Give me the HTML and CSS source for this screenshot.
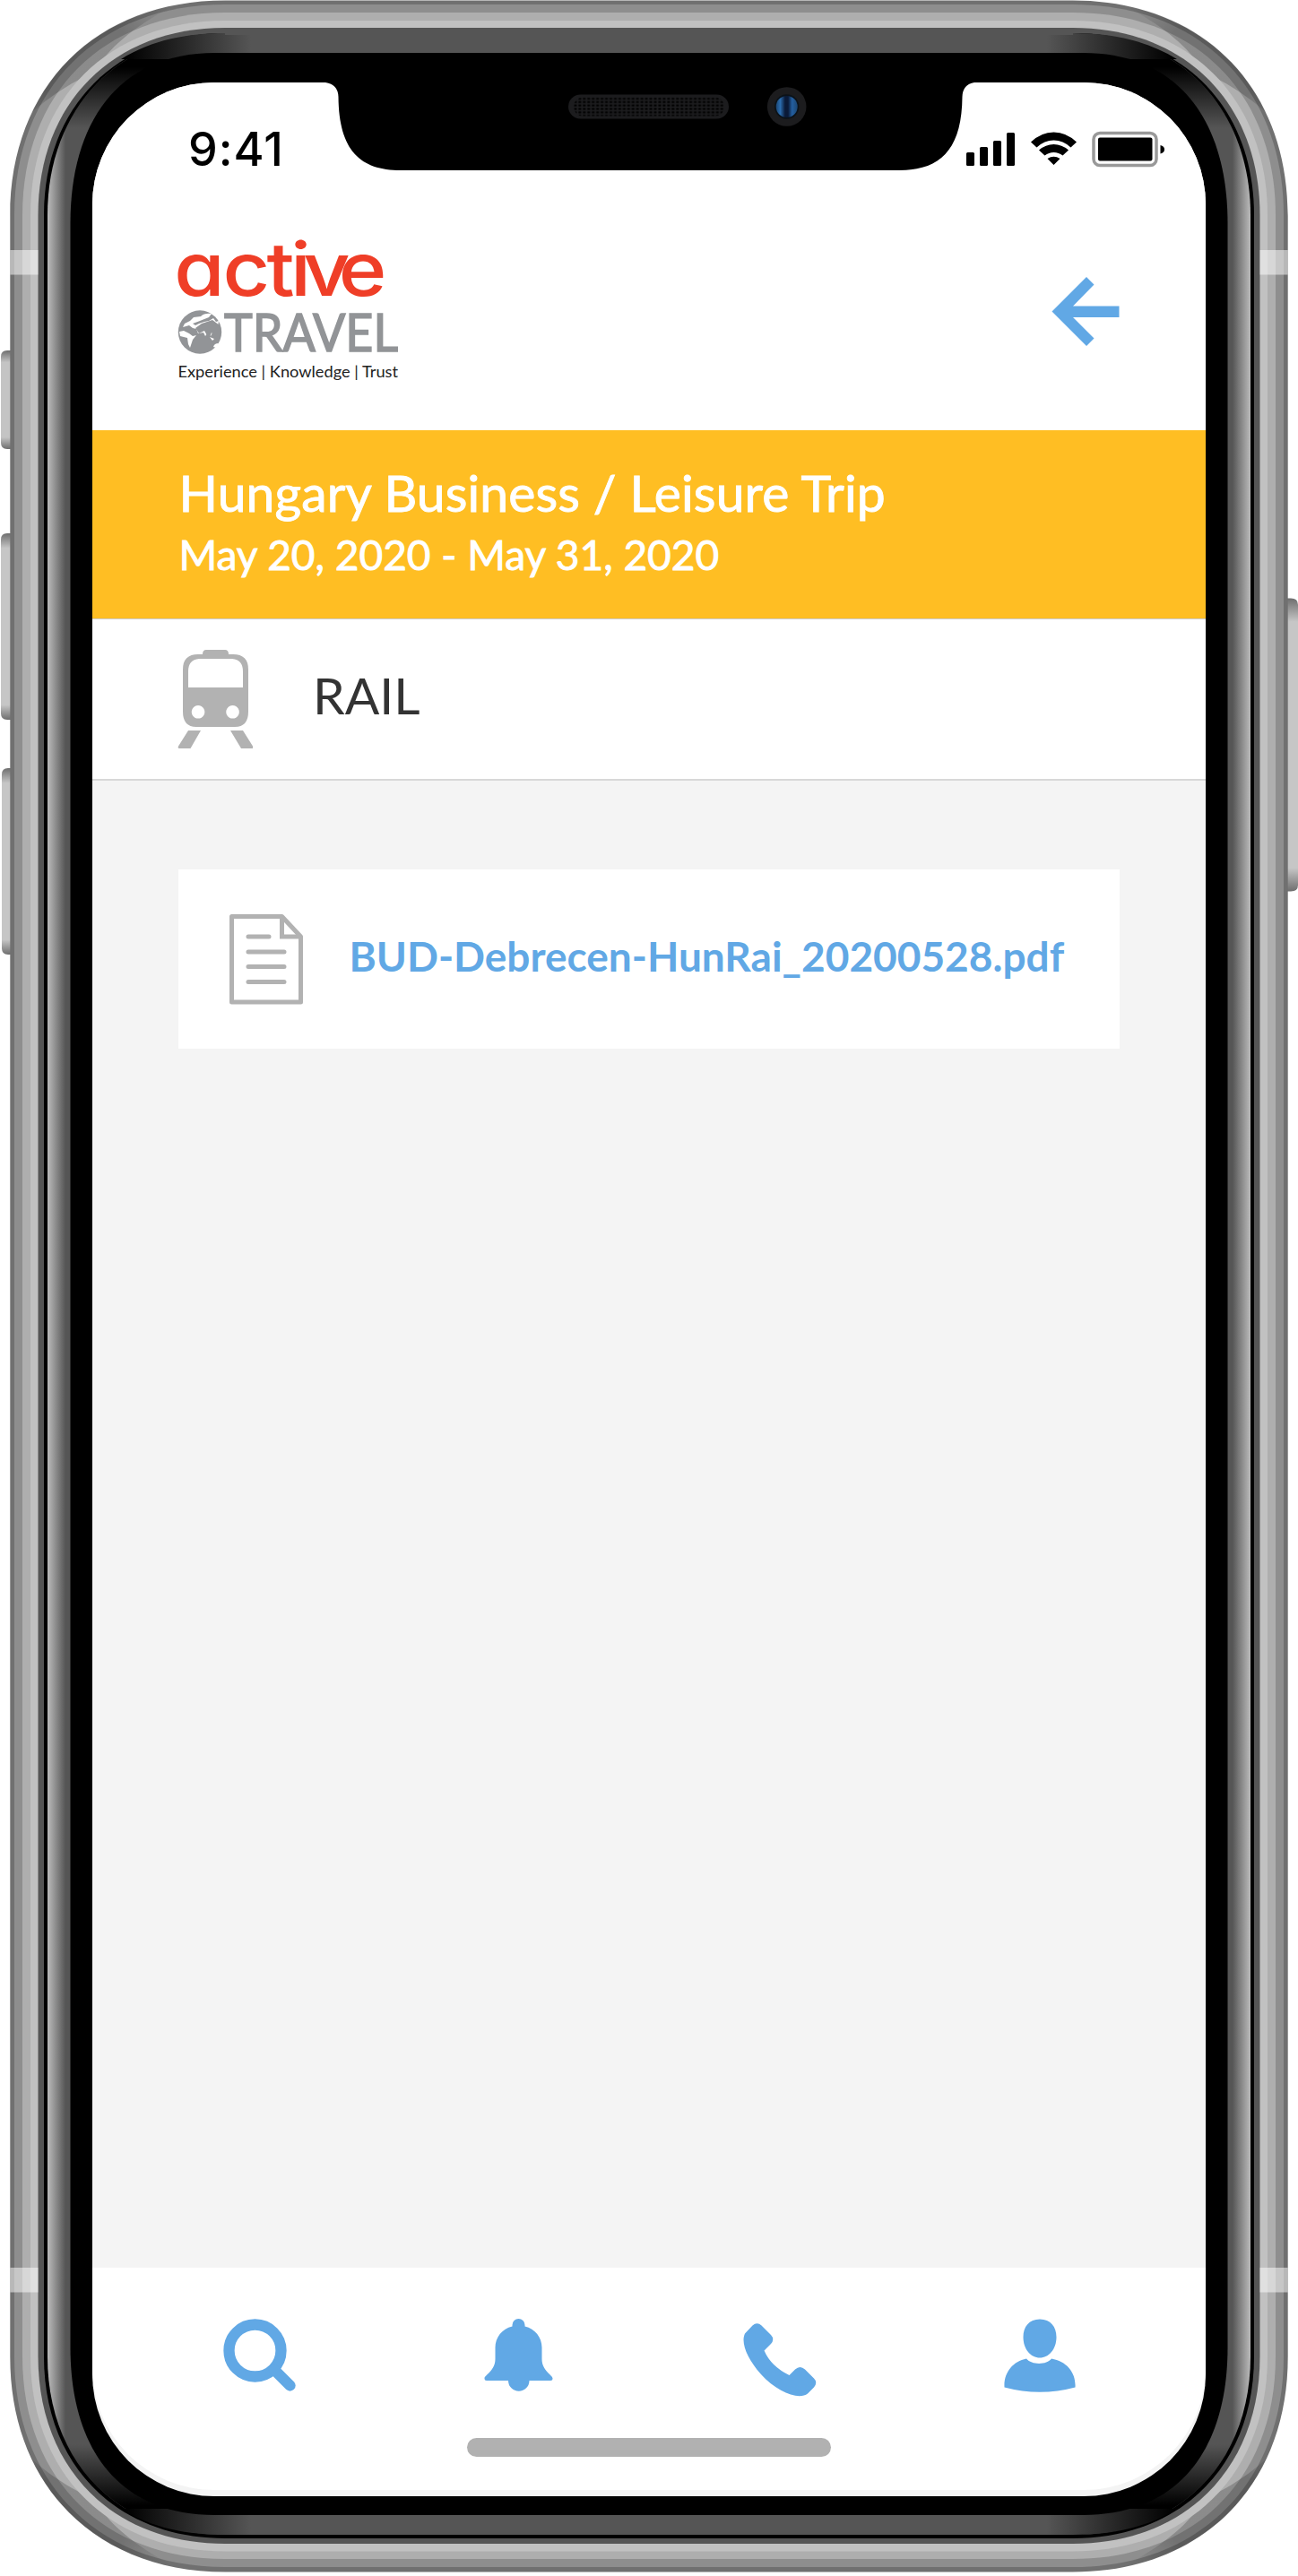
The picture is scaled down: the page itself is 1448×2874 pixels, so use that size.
FILE: index.html
```html
<!DOCTYPE html>
<html lang="en">
<head>
<meta charset="utf-8">
<title>Active Travel - Rail</title>
<link rel="stylesheet" href="styles.css">
</head>
<body>
<main class="phone">
  <svg class="frame" viewBox="0 0 1448 2874" aria-hidden="true">
    <defs>
      <linearGradient id="btn" x1="0" y1="0" x2="0" y2="1"><stop offset="0" stop-color="#6e6e6e"/><stop offset=".12" stop-color="#c4c4c4"/><stop offset=".88" stop-color="#c4c4c4"/><stop offset="1" stop-color="#6e6e6e"/></linearGradient>
      <linearGradient id="btnLong" x1="0" y1="0" x2="0" y2="1"><stop offset="0" stop-color="#6e6e6e"/><stop offset=".08" stop-color="#c6c6c6"/><stop offset=".92" stop-color="#c6c6c6"/><stop offset="1" stop-color="#6e6e6e"/></linearGradient>
      <linearGradient id="side" gradientUnits="userSpaceOnUse" x1="53" y1="0" x2="1395" y2="0"><stop offset="0" stop-color="#bbb"/><stop offset=".015" stop-color="#555"/><stop offset=".985" stop-color="#555"/><stop offset="1" stop-color="#bbb"/></linearGradient>
      <linearGradient id="top" gradientUnits="userSpaceOnUse" x1="140" y1="0" x2="1308" y2="0"><stop offset="0" stop-color="#000"/><stop offset=".12" stop-color="#555"/><stop offset=".88" stop-color="#555"/><stop offset="1" stop-color="#000"/></linearGradient>
      <linearGradient id="vfade" gradientUnits="userSpaceOnUse" x1="0" y1="75" x2="0" y2="2795"><stop offset="0" stop-color="#000"/><stop offset=".025" stop-color="#000" stop-opacity="0"/><stop offset=".975" stop-color="#000" stop-opacity="0"/><stop offset="1" stop-color="#000"/></linearGradient>
      <linearGradient id="facet" gradientUnits="userSpaceOnUse" x1="35" y1="145" x2="180" y2="10"><stop offset="0" stop-opacity="0"/><stop offset=".22" stop-opacity=".2"/><stop offset=".75" stop-opacity=".2"/><stop offset="1" stop-opacity=".03"/></linearGradient>
      <linearGradient id="lens" x1="0" y1="0" x2="1" y2="0"><stop offset="0" stop-color="#1b4673"/><stop offset=".2" stop-color="#2b6cae"/><stop offset=".42" stop-color="#0a1a38"/><stop offset=".56" stop-color="#0a1a38"/><stop offset=".75" stop-color="#245f9f"/><stop offset="1" stop-color="#1b4673"/></linearGradient>
      <pattern id="mesh" width="4.95" height="3.8" patternUnits="userSpaceOnUse" x="640" y="108.6"><rect x=".4" y=".5" width="3" height="2" fill="#000"/></pattern>
      <clipPath id="body"><path d="M251.3 0h945.4c144 0 240 96 240 240v2389c0 144-96 240-240 240h-945.4c-144 0-240-96-240-240V240C11.3 96 107.3 0 251.3 0z"/></clipPath>
      <path id="corner" d="M0 160C45 112 75 94 107 80C118 55 150 30 190 8L0 0z"/>
    </defs>
    <g fill="url(#btn)"><path d="M12 391H8q-7 0-7 7v96q0 7 7 7h4z"/></g>
    <g fill="url(#btnLong)"><path d="M12 595H8q-7 0-7 7v194q0 7 7 7h4z"/><path d="M12 857H9q-7 0-7 7v194q0 7 7 7h3z"/><path d="M1436 667.500h4q8 0 8 7v313q0 7-8 7h-4z"/></g>
    <path fill="#707070" d="M251.3.5h945.4c144 0 240 96 240 240v2389c0 144-96 240-240 240h-945.4c-144 0-240-96-240-240v-2389c0-144 96-240 240-240z"/>
    <path fill="#8e8e8e" d="M251 5h946c141 0 235 94 235 235v2389c0 141-94 235-235 235H251c-141 0-235-94-235-235V240C16 99 110 5 251 5z"/>
    <path fill="#aeaeae" d="M251 14h946c136 0 226 90 226 226v2389c0 136-90 226-226 226H251c-136 0-226-90-226-226V240C25 104 115 14 251 14z"/>
    <g clip-path="url(#body)" fill="url(#facet)"><use href="#corner"/><use href="#corner" transform="matrix(-1 0 0 1 1448 0)"/><use href="#corner" transform="matrix(1 0 0 -1 0 2869)"/><use href="#corner" transform="matrix(-1 0 0 -1 1448 2869)"/></g>
    <path fill="#c1c1c1" d="M251 23h946c130 0 217 87 217 217v2389c0 130-87 217.500-217 217.500H251c-130 0-217-87.500-217-217.500V240C34 110 121 23 251 23z"/>
    <path fill="#555" d="M251 31h946c125 0 208.500 84 208.500 209v2389c0 125-83.500 209-208.500 209H251c-125 0-208.500-84-208.500-209V240C42.500 115 126 31 251 31z"/>
    <path fill="#000" d="M251 37h946c121 0 202 82 202 203v2389c0 121-81 203-202 203H251c-121 0-202-82-202-203V240C49 119 130 37 251 37z"/>
    <path fill="url(#side)" d="M251 37h946c119 0 198 84 198 203v2389c0 119-79 199-198 199H251c-119 0-198-80-198-199V240C53 121 132 37 251 37z"/>
    <path fill="url(#vfade)" d="M251 37h946c119 0 198 84 198 203v2389c0 119-79 199-198 199H251c-119 0-198-80-198-199V240C53 121 132 37 251 37z"/>
    <path fill="url(#top)" d="M135 66C170 44 210 37 251 37h946c41 0 81 7 116 29zM135 2799C170 2821 210 2828 251 2828h946c41 0 81-7 116-29z"/>
    <path fill="#555" d="M251 31h946v8H251z"/>
    <path fill="#000" d="M240 59h968c110 0 161.500 80 161.500 190v2370c0 110-51.500 187-161.500 187H240c-110 0-161.500-77-161.500-187V249C78.500 139 130 59 240 59z"/>
    <path fill="#fff" fill-opacity=".5" d="M11.300 279H42.500v27.500H11.300zM1405.500 279h31.200v27.500h-31.200zM11.300 2530H42.500v27.500H11.300zM1405.500 2530h31.200v27.500h-31.200z"/>
  </svg>

  <section class="screen">
    <div class="status">
      <span class="clock">9:41</span>
      <svg class="indicators" viewBox="0 0 224 42" width="224" height="42" aria-hidden="true">
        <g fill="#000"><rect x="1" y="24" width="9" height="15" rx="1.500"/><rect x="16" y="18" width="9" height="21" rx="1.500"/><rect x="31" y="11" width="9" height="28" rx="1.500"/><rect x="46" y="2" width="9" height="37" rx="1.500"/></g>
        <path d="M73 12.500Q84.500 1.500 98.500 1.500T124 12.500L117.500 18.500Q109 10.500 98.500 10.500T79.500 18.500zM82 21.500Q89.500 15 98.500 15T115 21.500L108.500 27.500Q104 24 98.500 24T88.500 27.500zM91.500 31Q98.500 26.500 105.500 31L98.500 38z"/>
        <rect x="143" y="2.500" width="70" height="36" rx="7" fill="none" stroke="#999" stroke-width="3.500"/><rect x="148" y="7.500" width="60.500" height="26" rx="2"/><path d="M217.500 16q4.500 1 4.500 4.700t-4.500 4.700z"/>
      </svg>
    </div>

    <header class="header">
      <svg class="logo" viewBox="0 0 250 160" width="250" height="160" role="img" aria-label="active travel">
        <text class="logo-active" transform="scale(1.1 1)" x="-3.500 46 90.500 114.500 127.500 163.500" y="61.500">active</text>
        <g transform="translate(0 78)">
          <circle cx="25" cy="24.500" r="24.200" fill="#929497"/>
          <path fill="#fff" d="M38 4Q30 3 26 7L18 8 14 12 8 15 6 19 13 17 17 20 21 21 23 26 29 25 31 29 34 25 37 29 40 23 44 25 46 12 43 13 40 9 35 12 30 13 24 15 20 17 17 15 25 12 35 8zM2 24L7 23 13 26 17 29 21 28 17 33 14 42 12 38 11 31 3 29z"/>
          <path fill="#929497" d="M27 15L39 11 47 17 48 29 43 32 38 25 35 32 30 23 24 26 20 20z"/>
          <path fill="#fff" d="M40 41q1-4 6-4l-3 5zM36 30l5 2-2 2z"/>
        </g>
        <text class="logo-travel" x="52" y="123.500" textLength="194" lengthAdjust="spacingAndGlyphs">TRAVEL</text>
        <text class="logo-tag" x="0.500" y="153" textLength="245.500" lengthAdjust="spacingAndGlyphs">Experience | Knowledge | Trust</text>
      </svg>
      <svg class="back" viewBox="0 0 76 78" width="76" height="78" aria-label="Back"><path fill="#61a8e5" d="M39 0l8.500 8.500L24 32.500h51.500v12.500H24l23.500 23.500L39 77 .5 38.500z"/></svg>
    </header>

    <section class="trip">
      <h1 class="trip-name">Hungary Business / Leisure Trip</h1>
      <p class="trip-dates">May 20, 2020 - May 31, 2020</p>
    </section>

    <section class="category">
      <svg class="train" viewBox="0 0 84 112" width="84" height="112" aria-hidden="true">
        <path fill="#b2b2b2" fill-rule="evenodd" d="M28 5q0-5 4-5h21q4 0 4 5h5Q79 5 79 22V69Q79 86 64 86H21Q6 86 6 69V22Q6 5 23 5zM24 10Q12 11 12 24V42H73V24Q73 11 61 10zM23 62a7.300 7.300 0 1 0 .1 0zM61.500 62a7.300 7.300 0 1 0 .1 0zM12 90H26L14.500 110H2Q0 110 1 107.500zM59 90H73L84 107.500Q85 110 83 110H71z"/>
      </svg>
      <h2 class="category-name">RAIL</h2>
    </section>

    <section class="documents">
      <a class="document">
        <svg class="doc-icon" viewBox="0 0 82 101" width="82" height="101" aria-hidden="true">
          <g fill="none" stroke="#b2b2b2" stroke-width="5" stroke-linejoin="round"><path d="M2.500 2.500H58.500L79.500 25V98H2.500z"/><path d="M58.500 2.500V25H79.500" stroke-linejoin="miter"/><path stroke-linecap="round" d="M21 25H44M21 42H61M21 58.500H61M21 75.500H61"/></g>
        </svg>
        <span class="doc-name">BUD-Debrecen-HunRai_20200528.pdf</span>
      </a>
    </section>

    <nav class="tabs">
      <div class="tab-row">
        <svg viewBox="0 0 81 82" width="81" height="82" aria-label="Search"><circle cx="35.500" cy="35.500" r="29" fill="none" stroke="#61a8e5" stroke-width="12.300"/><path d="M57 57L74.500 74.500" stroke="#61a8e5" stroke-width="12.300" stroke-linecap="round"/></svg>
        <svg viewBox="0 0 77 82" width="77" height="82" aria-label="Alerts"><path fill="#61a8e5" d="M31.500 8.500V7a7 7 0 0 1 14 0V8.500C57 11 64.500 21 64.500 32V45C64.500 58 76.500 63 76.500 66.500Q76.500 69 74 69H50.500A11.700 11.700 0 0 1 27 69H3Q.5 69 .5 66.500C.5 63 12.500 58 12.500 45V32C12.500 21 20 11 31.500 8.500z"/></svg>
        <svg class="tab-call" viewBox="0 0 82 82" width="82" height="82" aria-label="Call"><path fill="#61a8e5" d="M10.500 2.500Q15.500-2 20.500 2.500L31 13Q35.500 18 31 23L23.500 30.500Q31 48 51.500 58L58 51.500Q63.500 46.500 69 51.500L79 61.500Q83.500 66 79 71.500L72 78.500C62 86 38 77 20 57C5 40-3 22 2 11.500z"/></svg>
        <svg viewBox="0 0 80 82" width="80" height="82" aria-label="Profile"><path fill="#61a8e5" d="M40 .5C52 .5 58.500 9 58.500 20.500C58.500 34 50 43.500 40 43.500S21.500 34 21.500 20.500C21.500 9 28 .5 40 .5zM25 44.500C31 52 48 51.500 53 44.500C70 47.500 80.500 60 79.500 76.500Q40 87 .5 76.500C-.5 60 10 47.500 25 44.500z"/></svg>
      </div>
      <div class="home-bar"></div>
    </nav>
  </section>

  <svg class="notch" viewBox="363 90 724 102" width="724" height="102" aria-hidden="true">
    <path d="M363 90V92Q377 94 377.500 108C378 168 402 190 447 190H1003C1048 190 1073 168 1073.500 108Q1074 94 1087 92V90z"/>
    <rect x="634" y="105.500" width="179" height="27" rx="13.500" fill="#1c1c1e"/><rect x="640" y="108.600" width="168" height="21" rx="10" fill="url(#mesh)"/>
    <circle cx="877.700" cy="119" r="21.800" fill="#1c1c1e"/><circle cx="877.700" cy="119" r="13.700" fill="#0b1218"/><circle cx="877.700" cy="119" r="12" fill="url(#lens)"/>
  </svg>
</main>
</body>
</html>
```
FILE: styles.css
```css
* { box-sizing: border-box; }
body { margin: 0; background: #fff; font-family: Lato, "Open Sans", sans-serif; }
h1, h2, p { margin: 0; font-weight: 400; white-space: nowrap; }
svg { display: block; flex: none; }

.phone { position: relative; width: 1448px; height: 2874px; overflow: hidden; padding: 92px 103px 0; }
.frame { position: absolute; left: 0; top: 0; width: 1448px; height: 2874px; }
.notch { position: absolute; left: 363px; top: 90px; }

.screen {
  position: relative; width: 1242px; height: 2692.5px; overflow: hidden;
  display: flex; flex-direction: column; background: #f4f4f4;
  border-radius: 136px;
}

.status { height: 158px; background: #fff; display: flex; justify-content: space-between; padding: 54px 44px 0 107px; }
.clock { font: 500 52px/42px Inter, sans-serif; letter-spacing: 1px; }

.header { height: 230px; background: #fff; display: flex; justify-content: space-between; padding: 18px 96px 0 95px; }
.back { margin-top: 41px; }
.logo { overflow: visible; }
.logo-active { font: 500 83px Inter, sans-serif; font-feature-settings: "cv11"; fill: #ef3e27; }
.logo-travel { font: 400 58.5px Lato, sans-serif; fill: #929497; stroke: #929497; stroke-width: 1.6px; }
.logo-tag { font: 400 17.5px Lato, sans-serif; fill: #222; }

.trip { height: 211px; background: #ffbe23; border-bottom: 1.5px solid #ccc; color: #fff; padding: 34px 0 0 96.5px; -webkit-text-stroke: .9px #fff; }
.trip-name { font-size: 57px; line-height: 70px; letter-spacing: .13px; }
.trip-dates { font-size: 46px; line-height: 62px; margin-top: 4px; }

.category { height: 180px; background: #fff; border-bottom: 2px solid #d8d8d8; display: flex; padding: 34px 0 0 95px; }
.category-name { font-size: 57px; line-height: 70px; color: #333; margin: 15px 0 0 67px; }

.documents { flex: 1; padding: 99px 96px 0 95.5px; }
.document { height: 200px; background: #fff; display: flex; align-items: center; padding-left: 57.5px; gap: 51.5px; }
.doc-name { font-size: 46px; line-height: 60px; font-weight: 700; color: #61a8e5; white-space: nowrap; padding-bottom: 7px; }

.tabs { height: 248px; margin-bottom: 6.5px; background: #fff; border-radius: 0 0 136px 136px; display: flex; flex-direction: column; align-items: center; }
.tab-row { align-self: stretch; display: flex; justify-content: space-between; padding: 57px 144.5px 0 145.5px; height: 190px; }
.tab-call { margin: 5px -1.5px 0 1.5px; }
.home-bar { width: 406px; height: 21px; border-radius: 10.5px; background: #b1b1b1; }
```
